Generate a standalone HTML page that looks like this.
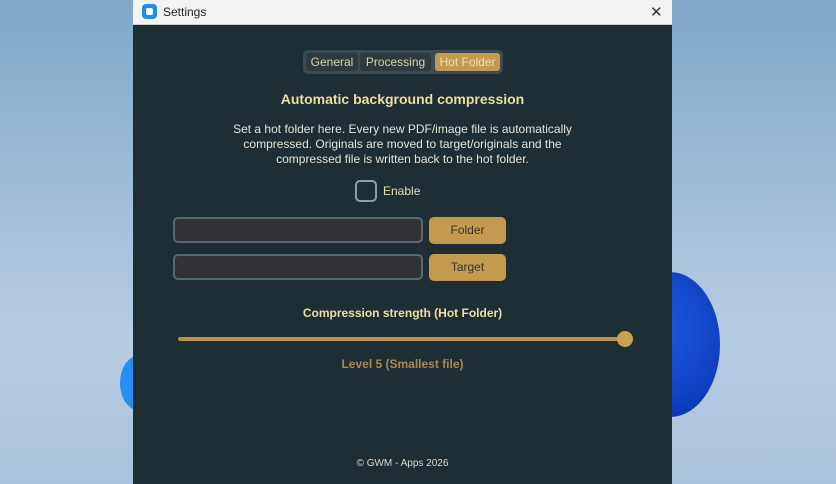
<!DOCTYPE html>
<html><head><style>
*{margin:0;padding:0;box-sizing:border-box}
body{width:836px;height:484px;overflow:hidden;position:relative;font-family:"Liberation Sans",Arial,sans-serif;background:linear-gradient(180deg,#7ea8c8 0%,#a4c0da 45%,#b6cde2 70%,#a9c3dc 100%)}
.blob{position:absolute;background:radial-gradient(circle at 30% 40%,#1e5fe0,#0f3fc0 70%,#0a2f9e);border-radius:50%}
.win{position:absolute;left:133px;top:0;width:539px;height:484px;background:#1f2e34}
.tb{position:absolute;left:0;top:0;width:539px;height:25px;background:#f3f3f3;border-bottom:1px solid #ccc}
.ic{position:absolute;left:9px;top:4px;width:15px;height:15px;border-radius:4px;background:#1e8fe8}
.ic:after{content:"";position:absolute;left:4px;top:4px;width:7px;height:7px;background:#fff;border-radius:2px}
.tt{position:absolute;left:30px;top:5px;font-size:12px;color:#222}
.x{position:absolute;left:517px;top:3px;font-size:15px;color:#333}
.tabs{position:absolute;left:170px;top:50px;width:200px;height:24px;background:#3a4c55;border-radius:5px}
.tab{position:absolute;top:3px;height:18px;font-size:12px;line-height:18px;text-align:center;color:#d9cfae;border-radius:3px;background:#2f3a3e}
.t{position:absolute;width:539px;left:0;text-align:center}
.inp{position:absolute;left:40px;width:250px;height:26px;border:2px solid #566a72;border-radius:5px;background:#323236}
.btn{position:absolute;left:296px;width:77px;height:27px;background:#c39a50;border-radius:5px;color:#3a3225;font-size:12px;line-height:27px;text-align:center}
</style></head><body>
<div class="blob" style="left:620px;top:272px;width:100px;height:145px"></div>
<div class="blob" style="left:120px;top:355px;width:40px;height:56px;background:#2a8ef0"></div>
<div class="win">
<div class="tb"><div class="ic"></div><div class="tt">Settings</div><div class="x">✕</div></div>
<div class="tabs">
<div class="tab" style="left:3px;width:52px">General</div>
<div class="tab" style="left:57px;width:71px">Processing</div>
<div class="tab" style="left:132px;width:65px;background:#c39a50;color:#f0dfb0">Hot Folder</div>
</div>
<div class="t" style="top:91px;font-size:14px;font-weight:bold;color:#ecdca8">Automatic background compression</div>
<div class="t" style="top:122px;font-size:12px;line-height:15px;color:#e6e2d8">Set a hot folder here. Every new PDF/image file is automatically<br>compressed. Originals are moved to target/originals and the<br>compressed file is written back to the hot folder.</div>
<div style="position:absolute;left:222px;top:180px;width:22px;height:22px;border:2px solid #8c9ea6;border-radius:5px"></div>
<div style="position:absolute;left:250px;top:184px;font-size:12px;color:#e6ddb8">Enable</div>
<div class="inp" style="top:217px"></div><div class="btn" style="top:217px">Folder</div>
<div class="inp" style="top:254px"></div><div class="btn" style="top:254px">Target</div>
<div class="t" style="top:306px;font-size:12px;font-weight:bold;color:#ecdca8">Compression strength (Hot Folder)</div>
<div style="position:absolute;left:45px;top:337px;width:446px;height:4px;background:#b4924f;border-radius:2px"></div>
<div style="position:absolute;left:484px;top:331px;width:16px;height:16px;background:#c9a155;border-radius:50%"></div>
<div class="t" style="top:357px;font-size:12px;font-weight:bold;color:#a88b52">Level 5 (Smallest file)</div>
<div class="t" style="top:458px;font-size:10px;color:#ddd8cc">© GWM - Apps 2026</div>
</div>
</body></html>
